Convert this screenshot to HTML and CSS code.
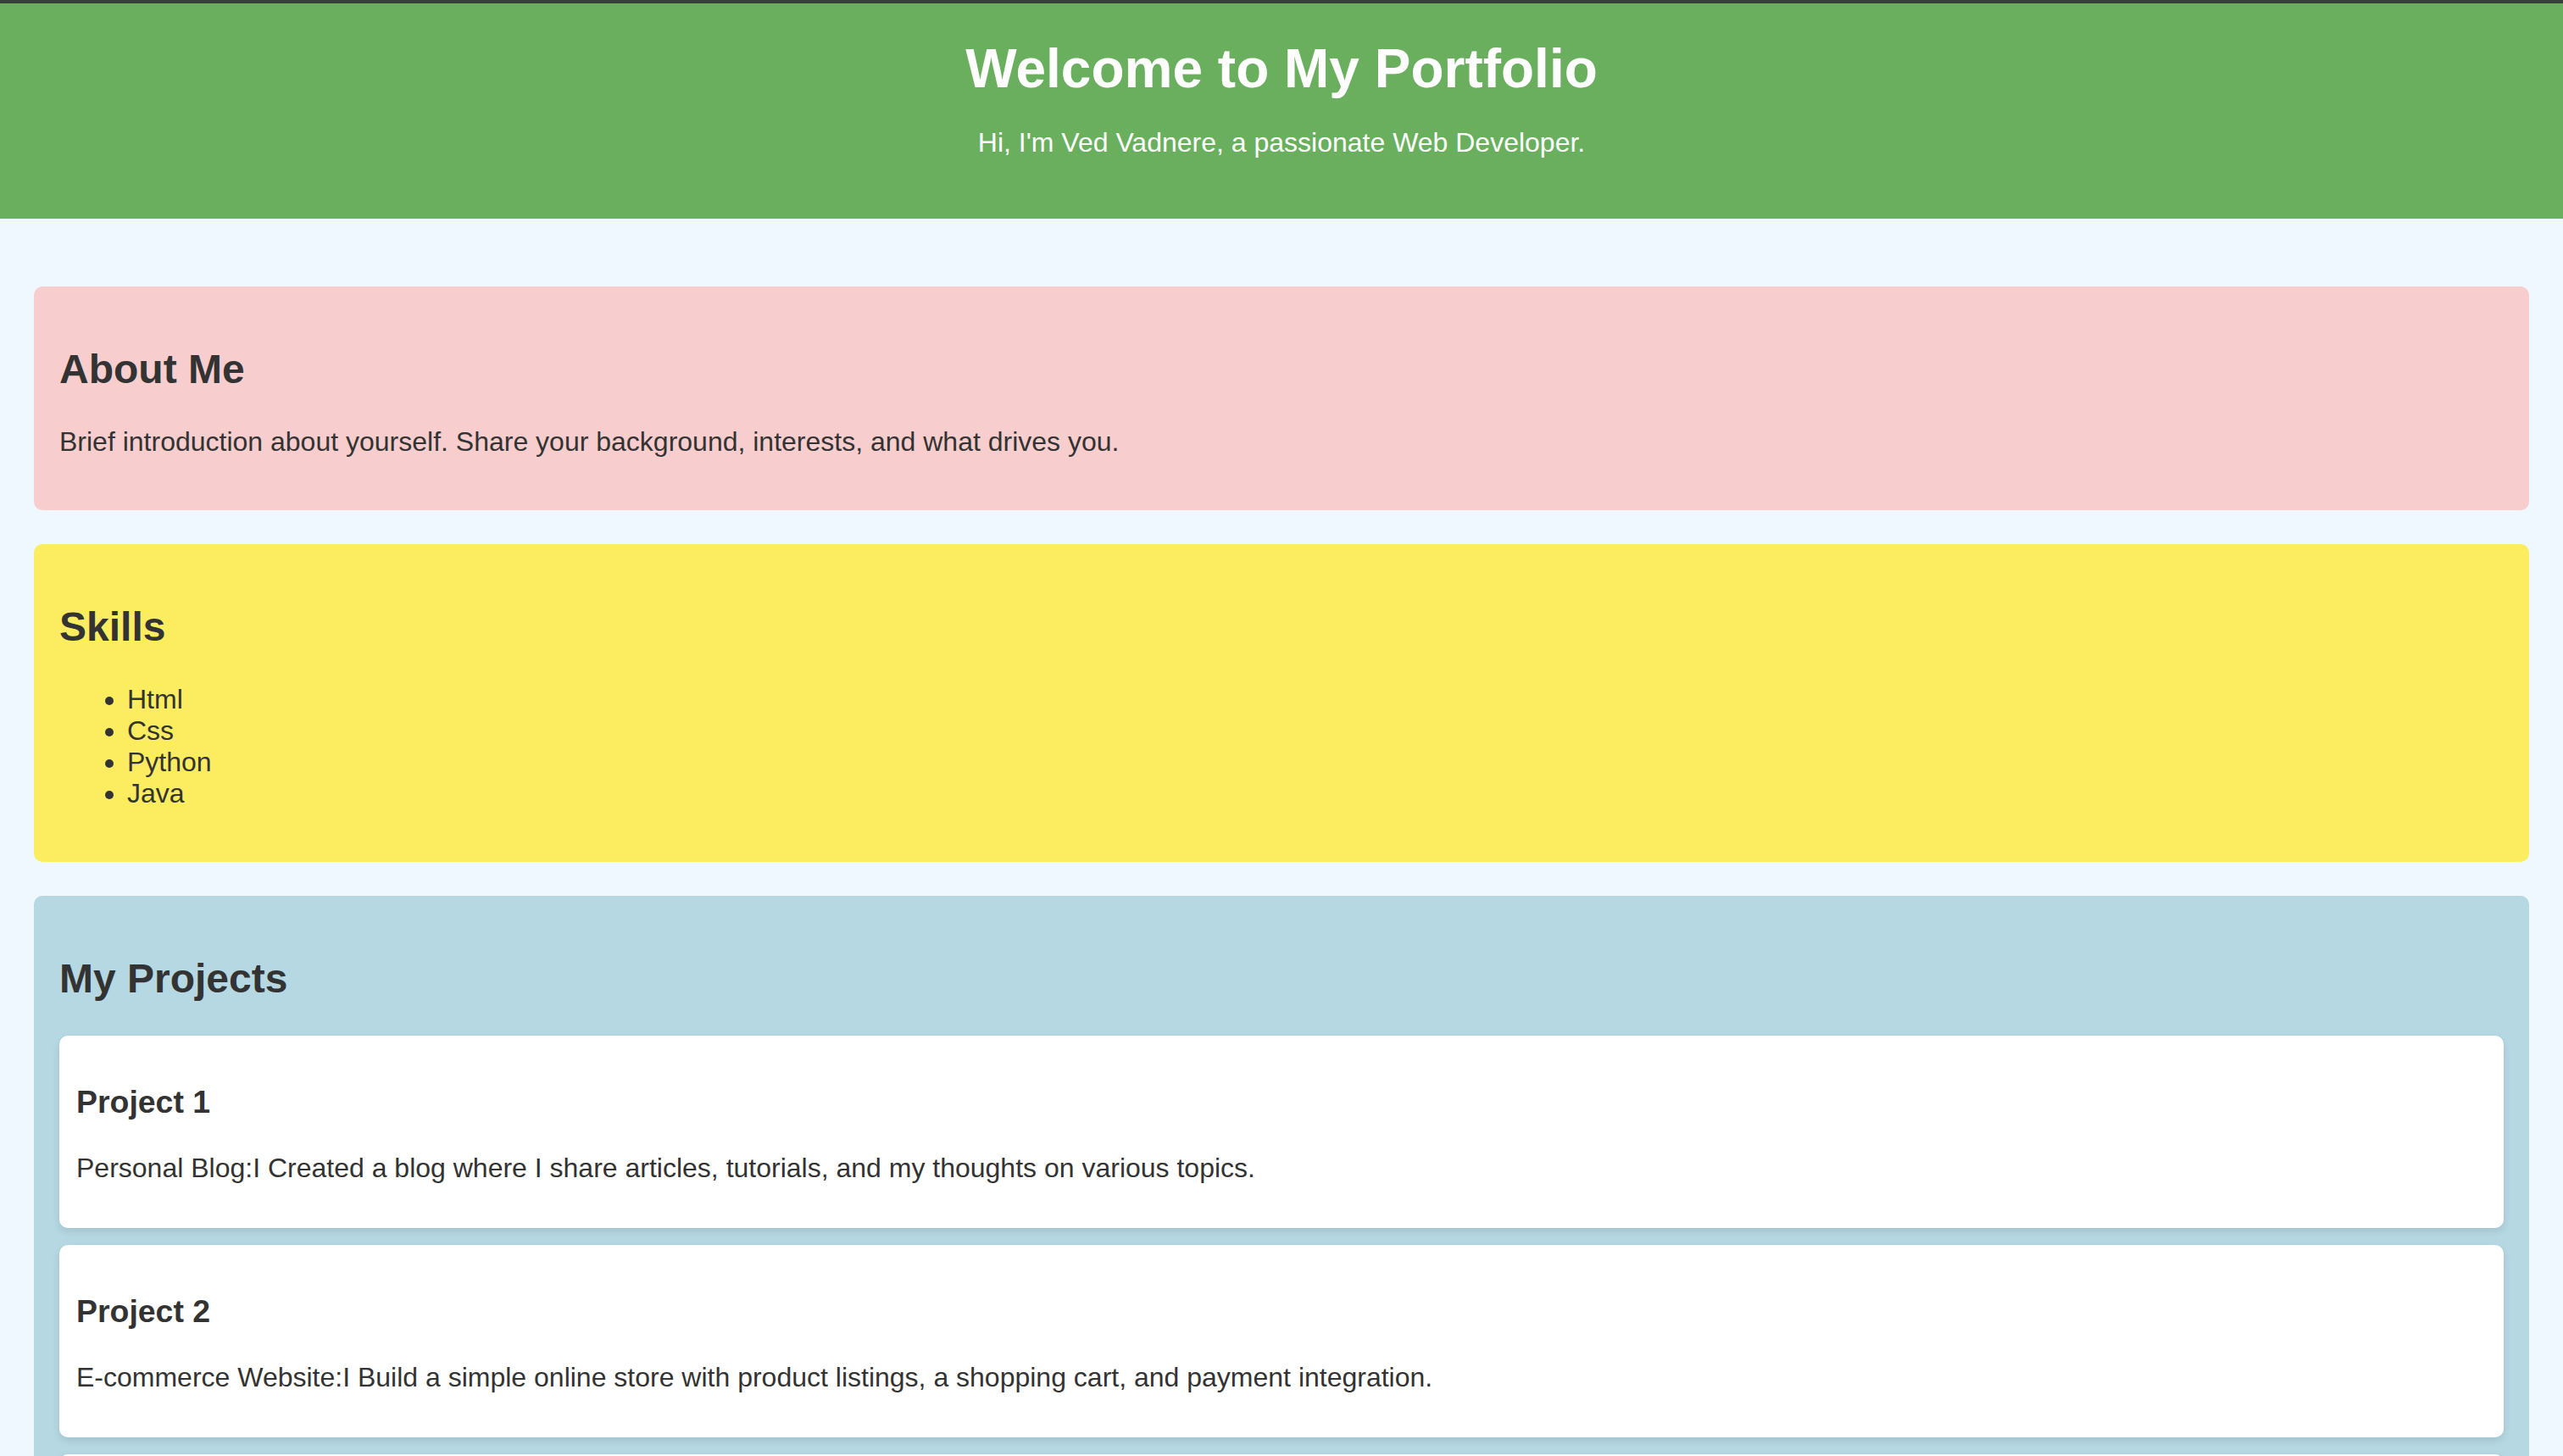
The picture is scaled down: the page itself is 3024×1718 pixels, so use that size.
FILE: index.html
```html
<!DOCTYPE html>
<html lang="en">
<head>
<meta charset="utf-8">
<title>My Portfolio</title>
<link rel="stylesheet" href="styles.css">
</head>
<body>
<header class="site-header">
  <h1 class="site-title">Welcome to My Portfolio</h1>
  <p class="site-tagline">Hi, I'm Ved Vadnere, a passionate Web Developer.</p>
</header>
<main class="content">
  <section class="panel panel-about">
    <h2 class="panel-title">About Me</h2>
    <p class="panel-text">Brief introduction about yourself. Share your background, interests, and what drives you.</p>
  </section>
  <section class="panel panel-skills">
    <h2 class="panel-title">Skills</h2>
    <ul class="skill-list">
      <li>Html</li>
      <li>Css</li>
      <li>Python</li>
      <li>Java</li>
    </ul>
  </section>
  <section class="panel panel-projects">
    <h2 class="panel-title">My Projects</h2>
    <div class="project-card">
      <h3 class="project-title">Project 1</h3>
      <p class="panel-text">Personal Blog:I Created a blog where I share articles, tutorials, and my thoughts on various topics.</p>
    </div>
    <div class="project-card">
      <h3 class="project-title">Project 2</h3>
      <p class="panel-text">E-commerce Website:I Build a simple online store with product listings, a shopping cart, and payment integration.</p>
    </div>
    <div class="project-card">
      <h3 class="project-title">Project 3</h3>
      <p class="panel-text">Portfolio Website:I Designed and developed this portfolio to showcase my skills and projects.</p>
    </div>
  </section>
</main>
</body>
</html>
```

FILE: styles.css
```css
html, body {
  margin: 0;
  padding: 0;
}

body {
  background: #f0f8ff;
  color: #333333;
  font-family: "Liberation Sans", Arial, Helvetica, sans-serif;
  font-size: 32px;
  line-height: normal;
}

.site-header {
  background: #69af5e;
  border-top: 4px solid #394039;
  color: #ffffff;
  text-align: center;
  padding: 40px 40px 39px;
}

.site-title {
  font-size: 64px;
  font-weight: bold;
  margin: 0;
}

.site-tagline {
  font-size: 32px;
  margin: 32px 0;
}

.content {
  padding: 40px;
}

.panel {
  margin: 40px 0;
  padding: 30px;
  border-radius: 10px;
}

.panel-about {
  background: #f7cecd;
}

.panel-skills {
  background: #fced60;
}

.panel-projects {
  background: #b5d8e3;
}

.panel-title {
  font-size: 48px;
  font-weight: bold;
  margin: 40px 0;
}

.panel-text {
  margin: 32px 0;
}

.skill-list {
  margin: 32px 0;
  padding-left: 80px;
}

.project-card {
  background: #ffffff;
  border-radius: 10px;
  padding: 0 20px;
  margin: 0 0 20px;
  box-shadow: 0 4px 10px rgba(0, 0, 0, 0.1);
  overflow: hidden;
}

.project-title {
  font-size: 37.44px;
  font-weight: bold;
  margin: 57.44px 0 37.44px;
}

.project-card .panel-text {
  margin: 32px 0 52px;
}
```
